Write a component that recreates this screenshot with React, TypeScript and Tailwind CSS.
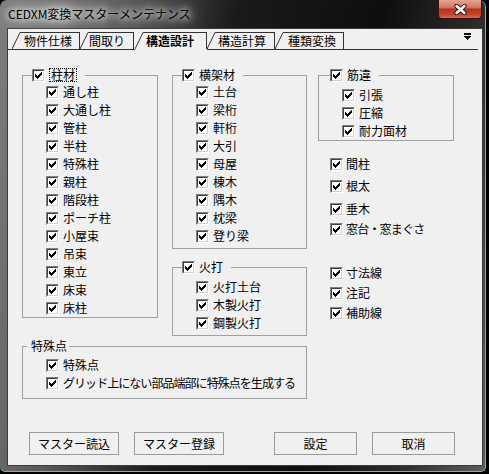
import React from "react";

function Check() {
  return (
    <span className="flex h-[13px] w-[13px] shrink-0 border border-t-[#808080] border-l-[#808080] border-b-white border-r-white">
      <span className="flex flex-1 items-center justify-center border border-t-[#404040] border-l-[#404040] border-b-[#d4d0c8] border-r-[#d4d0c8] bg-white">
        <svg width="7" height="7" viewBox="0 0 7 7" shapeRendering="crispEdges">
          <path
            d="M0 2h1v3H0zM1 3h1v3H1zM2 4h1v3H2zM3 3h1v3H3zM4 2h1v3H4zM5 1h1v3H5zM6 0h1v3H6z"
            fill="#000"
          />
        </svg>
      </span>
    </span>
  );
}

function Row({ label, className = "", textClass = "" }: { label: string; className?: string; textClass?: string }) {
  return (
    <div className={"flex h-[18px] items-center gap-[4px] " + className}>
      <Check />
      <span className={"whitespace-nowrap leading-[14px] " + textClass}>{label}</span>
    </div>
  );
}

function Group({
  title,
  items,
  width,
  legendClass = "ml-[9px]",
  bodyClass = "",
  focus = false,
}: {
  title: string;
  items: string[];
  width: string;
  legendClass?: string;
  bodyClass?: string;
  focus?: boolean;
}) {
  return (
    <fieldset className={"min-w-0 border border-[#a0a0a0] " + width}>
      <legend className={"pr-[8px] " + legendClass}>
        <div className="flex h-[16px] items-center gap-[4px]">
          <Check />
          {focus ? (
            <span className="border border-dotted border-black px-[1px] leading-[12px]">{title}</span>
          ) : (
            <span className="leading-[14px]">{title}</span>
          )}
        </div>
      </legend>
      <div className={"pl-[23px] " + bodyClass}>
        {items.map((t) => (
          <Row key={t} label={t} />
        ))}
      </div>
    </fieldset>
  );
}

const tabs = [
  { label: "物件仕様", w: "w-[60px]", pl: "pl-[4px]", ml: "" },
  { label: "間取り", w: "w-[46px]", pl: "pl-[1px]", ml: "" },
  { label: "構造設計", w: "w-[64px]", pl: "pl-[3px]", ml: "ml-[1px]", active: true },
  { label: "構造計算", w: "w-[60px]", pl: "pl-[3px]", ml: "" },
  { label: "種類変換", w: "w-[61px]", pl: "pl-[5px]", ml: "" },
];

function Slant({ h }: { h: number }) {
  return (
    <svg width="8" height={h} viewBox={`0 0 8 ${h}`} className="shrink-0">
      <line x1="0" y1="17" x2="8" y2="0.5" stroke="#333" strokeWidth="1" />
    </svg>
  );
}

function Button({ label, w, className = "" }: { label: string; w: string; className?: string }) {
  return (
    <button
      type="button"
      className={
        "flex h-[23px] items-center justify-center border border-[#9a9a9a] bg-[#f0f0f0] leading-[14px] " + w + " " + className
      }
    >
      {label}
    </button>
  );
}

function Single({ label, mt, textClass = "" }: { label: string; mt: string; textClass?: string }) {
  return (
    <div className={"flex h-[18px] items-center gap-[3px] " + mt}>
      <Check />
      <span className={"whitespace-nowrap leading-[14px] " + textClass}>{label}</span>
    </div>
  );
}

export default function App() {
  return (
    <div className="h-[474px] w-[489px] bg-black font-['Noto_Sans_CJK_JP',sans-serif] text-[12px] text-black">
      <div className="h-[472px] w-[486px] rounded-t-[7px] rounded-b-[5px] border-r border-b border-[#48c0e4] bg-[linear-gradient(100deg,#7e7e7e_0%,#5a5a5a_22%,#1a1a1a_42%,#0e0e0e_68%,#2e2e2e_86%,#5e5e5e_100%)]">
        {/* title bar */}
        <div className="flex h-[28px] items-start justify-between">
          <span className="mt-[7px] pl-[8px] leading-[14px] [text-shadow:0_0_6px_#fff,0_0_10px_#fff,0_0_16px_#fff,0_0_22px_rgba(255,255,255,0.8)]">
            CEDXM変換マスターメンテナンス
          </span>
          <div className="mr-[3px] flex h-[19px] w-[44px] items-center justify-center rounded-b-[4px] border border-t-0 border-[#3b0e08] bg-[linear-gradient(#e6a393_0%,#d47a68_40%,#b5341c_52%,#c4432a_80%,#de6a4c_100%)]">
            <svg width="13" height="11" viewBox="0 0 13 11">
              <path d="M2.5 2 L10.5 9 M10.5 2 L2.5 9" stroke="#3a1a14" strokeWidth="4.5" strokeLinecap="round" />
              <path d="M2.5 2 L10.5 9 M10.5 2 L2.5 9" stroke="#fff" strokeWidth="2.4" strokeLinecap="round" />
            </svg>
          </div>
        </div>

        {/* client area */}
        <div className="ml-[7px] flex h-[438px] w-[476px] flex-col border border-[#3c3c3c] bg-[#f0f0f0]">
          {/* tab strip */}
          <div className="mt-[3px] mr-[4px] flex h-[18px] items-end border-b border-[#333] pl-[4px]">
            {tabs.map((t) =>
              t.active ? (
                <div key={t.label} className={"relative -mb-px flex h-[18px] items-start bg-[#f0f0f0] " + t.ml}>
                  <Slant h={18} />
                  <div
                    className={
                      "flex h-[17px] items-center border-t border-r border-[#333] font-bold leading-[14px] " + t.w + " " + t.pl
                    }
                  >
                    {t.label}
                  </div>
                </div>
              ) : (
                <div key={t.label} className={"flex h-[17px] items-start " + t.ml}>
                  <Slant h={17} />
                  <div
                    className={"flex h-[17px] items-center border-t border-r border-[#333] leading-[14px] " + t.w + " " + t.pl}
                  >
                    {t.label}
                  </div>
                </div>
              )
            )}
            <svg width="7" height="7" viewBox="0 0 7 7" className="mr-[7px] mb-[9px] ml-auto" shapeRendering="crispEdges">
              <rect x="0" y="0" width="7" height="2" fill="#000" />
              <path d="M0 3h7L3.5 7z" fill="#000" />
            </svg>
          </div>

          {/* panel content */}
          <div className="flex flex-col pt-[17px] pl-[14px]">
            <div className="flex items-start">
              <Group
                title="柱材"
                focus
                width="w-[136px]"
                items={[
                  "通し柱",
                  "大通し柱",
                  "管柱",
                  "半柱",
                  "特殊柱",
                  "親柱",
                  "階段柱",
                  "ポーチ柱",
                  "小屋束",
                  "吊束",
                  "東立",
                  "床束",
                  "床柱",
                ]}
              />

              <div className="ml-[14px] flex w-[135px] flex-col">
                <Group
                  title="横架材"
                  width="w-[135px]"
                  bodyClass="pb-[3px]"
                  items={["土台", "梁桁", "軒桁", "大引", "母屋", "棟木", "隅木", "枕梁", "登り梁"]}
                />
                <div className="mt-[10px]">
                  <Group
                    title="火打"
                    width="w-[135px]"
                    bodyClass="pt-[3px] pb-[3px]"
                    items={["火打土台", "木製火打", "鋼製火打"]}
                  />
                </div>
              </div>

              <div className="ml-[11px] flex w-[136px] flex-col">
                <Group
                  title="筋違"
                  width="w-[136px]"
                  legendClass="ml-[11px]"
                  bodyClass="pt-[3px]"
                  items={["引張", "圧縮", "耐力面材"]}
                />
                <div className="flex flex-col pl-[12px]">
                  <Single label="間柱" mt="mt-[14px]" />
                  <Single label="根太" mt="mt-[4px]" />
                  <Single label="垂木" mt="mt-[5px]" />
                  <Single label="窓台・窓まぐさ" mt="mt-[2px]" textClass="tracking-[-0.8px]" />
                  <Single label="寸法線" mt="mt-[26px]" />
                  <Single label="注記" mt="mt-[2px]" />
                  <Single label="補助線" mt="mt-[2px]" />
                </div>
              </div>
            </div>

            {/* 特殊点 */}
            <fieldset className="mt-[2px] w-[285px] min-w-0 border border-[#a0a0a0]">
              <legend className="ml-[4px] pr-[2px] pl-[4px]">
                <div className="flex h-[16px] items-center leading-[14px]">特殊点</div>
              </legend>
              <div className="pt-[2px] pb-[6px] pl-[23px]">
                <Row label="特殊点" />
                <Row label="グリッド上にない部品端部に特殊点を生成する" textClass="tracking-[-0.95px]" />
              </div>
            </fieldset>

            {/* buttons */}
            <div className="mt-[33px] ml-[7px] flex">
              <Button label="マスター読込" w="w-[90px]" />
              <Button label="マスター登録" w="w-[90px]" className="ml-[15px]" />
              <Button label="設定" w="w-[83px]" className="ml-[50px]" />
              <Button label="取消" w="w-[83px]" className="ml-[15px]" />
            </div>
          </div>
        </div>
      </div>
    </div>
  );
}
